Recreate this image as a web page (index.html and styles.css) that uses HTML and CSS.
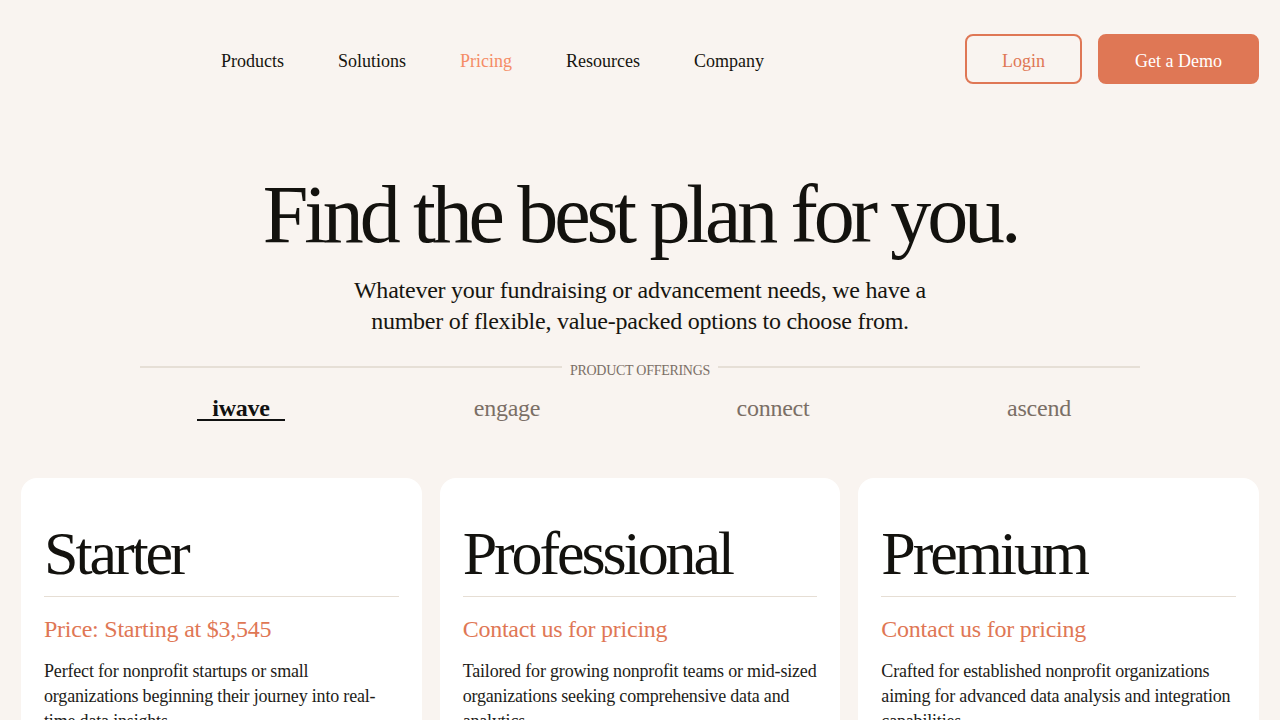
FILE: index.html
```html
<!DOCTYPE html>
<html lang="en">
<head>
<meta charset="utf-8">
<title>Pricing</title>
<link rel="stylesheet" href="styles.css">
</head>
<body>
<header class="header">
  <div class="logo"></div>
  <nav class="nav">
    <a class="nav-link" href="#">Products</a>
    <a class="nav-link" href="#">Solutions</a>
    <a class="nav-link active" href="#">Pricing</a>
    <a class="nav-link" href="#">Resources</a>
    <a class="nav-link" href="#">Company</a>
  </nav>
  <div class="actions">
    <a class="btn btn-outline" href="#">Login</a>
    <a class="btn btn-solid" href="#">Get a Demo</a>
  </div>
</header>

<section class="hero">
  <h1 class="hero-title">Find the best plan for you.</h1>
  <p class="hero-sub">Whatever your fundraising or advancement needs, we have a<br>number of flexible, value-packed options to choose from.</p>
  <div class="offerings">
    <span class="offerings-line"></span>
    <span class="offerings-label">PRODUCT OFFERINGS</span>
    <span class="offerings-line"></span>
  </div>
  <div class="tabs">
    <div class="tab-cell"><span class="tab active">iwave</span></div>
    <div class="tab-cell"><span class="tab">engage</span></div>
    <div class="tab-cell"><span class="tab">connect</span></div>
    <div class="tab-cell"><span class="tab">ascend</span></div>
  </div>
</section>

<section class="cards">
  <article class="card">
    <h2 class="card-title">Starter</h2>
    <p class="card-price">Price: Starting at $3,545</p>
    <p class="card-desc">Perfect for nonprofit startups or small organizations beginning their journey into real-time data insights.</p>
  </article>
  <article class="card">
    <h2 class="card-title">Professional</h2>
    <p class="card-price">Contact us for pricing</p>
    <p class="card-desc">Tailored for growing nonprofit teams or mid-sized organizations seeking comprehensive data and analytics.</p>
  </article>
  <article class="card">
    <h2 class="card-title">Premium</h2>
    <p class="card-price">Contact us for pricing</p>
    <p class="card-desc">Crafted for established nonprofit organizations aiming for advanced data analysis and integration capabilities.</p>
  </article>
</section>
</body>
</html>
```

FILE: styles.css
```css
* { box-sizing: border-box; }

html, body {
  margin: 0;
  padding: 0;
  background: #f9f4f0;
  font-family: "Liberation Serif", "Times New Roman", serif;
  color: #13120e;
}

a { text-decoration: none; }

.header {
  display: flex;
  align-items: center;
  height: 118px;
  padding: 0 21px;
}

.logo {
  width: 173px;
  height: 40px;
}

.nav {
  display: flex;
  align-items: center;
}

.nav-link {
  font-size: 18px;
  color: #16150f;
  padding: 4px 27px 0;
  line-height: 24px;
}

.nav-link.active { color: #f58c66; }

.actions {
  margin-left: auto;
  display: flex;
  gap: 16px;
}

.btn {
  display: flex;
  align-items: center;
  justify-content: center;
  height: 50px;
  padding: 5px 35px 0;
  border: 2px solid #df7755;
  border-radius: 8px;
  font-size: 18px;
}

.btn-outline {
  color: #df7755;
  width: 117px;
}

.btn-solid {
  background: #df7755;
  color: #fff;
  width: 161px;
}

.hero {
  text-align: center;
}

.hero-title {
  margin: 52px 0 0;
  font-weight: 400;
  font-size: 82px;
  line-height: 90px;
  letter-spacing: -0.05em;
  color: #13120e;
}

.hero-sub {
  margin: 15px 0 0;
  font-size: 24px;
  line-height: 31px;
  letter-spacing: -0.01em;
  color: #16150f;
}

.offerings {
  width: 1000px;
  margin: 24px auto 0;
  display: flex;
  align-items: center;
  gap: 8px;
}

.offerings-line {
  flex: 1;
  height: 2px;
  background: #e6dfd6;
  margin-top: -8px;
}

.offerings-label {
  font-size: 14px;
  letter-spacing: -0.02em;
  color: #7b6f66;
  line-height: 20px;
}

.tabs {
  width: 1064px;
  margin: 16px auto 0;
  display: grid;
  grid-template-columns: repeat(4, 1fr);
}

.tab-cell {
  display: flex;
  justify-content: center;
}

.tab {
  font-size: 24px;
  line-height: 22px;
  letter-spacing: -0.01em;
  color: #7b6f66;
  padding: 0 15px;
  border-bottom: 2px solid transparent;
}

.tab.active {
  color: #111;
  font-weight: 700;
  border-bottom-color: #111;
}

.cards {
  display: grid;
  grid-template-columns: repeat(3, 1fr);
  gap: 18px;
  padding: 0 21px;
  margin-top: 57px;
}

.card {
  background: #fff;
  border-radius: 16px;
  padding: 40px 23px 30px;
}

.card-title {
  margin: 0;
  font-weight: 400;
  font-size: 62px;
  line-height: 70px;
  letter-spacing: -0.05em;
  color: #13120e;
  padding-bottom: 8px;
  border-bottom: 1px solid #e6ded4;
}

.card-price {
  margin: 16px 0 0;
  font-size: 24px;
  line-height: 32px;
  letter-spacing: -0.01em;
  color: #df7755;
}

.card-desc {
  margin: 14px 0 0;
  font-size: 18px;
  line-height: 25px;
  letter-spacing: -0.01em;
  color: #1d1c18;
}
```
